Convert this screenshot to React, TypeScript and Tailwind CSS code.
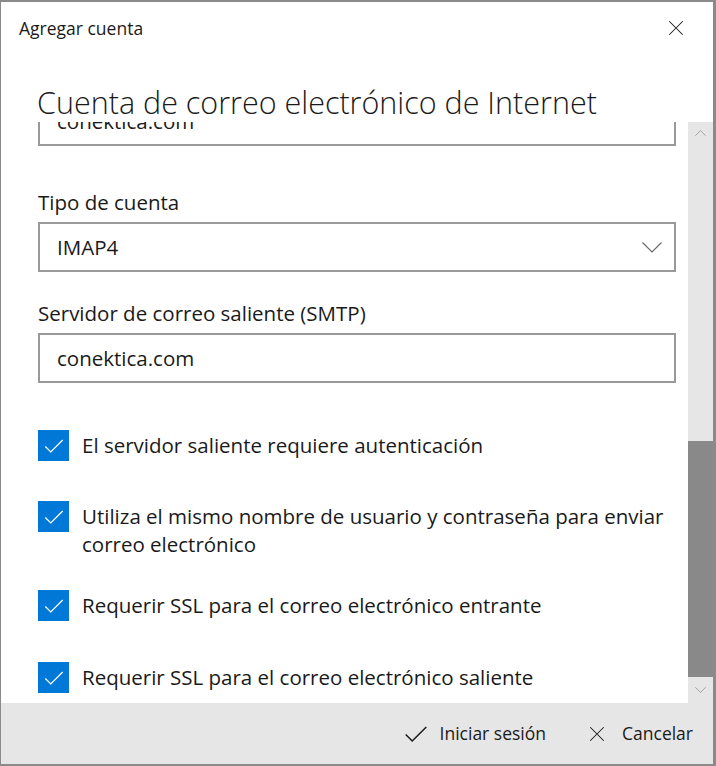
const font = { fontFamily: '"Open Sans", "Noto Sans", sans-serif' };

const options: { lines: string[]; gap: string }[] = [
  { lines: ['El servidor saliente requiere autenticación'], gap: 'mt-0' },
  { lines: ['Utiliza el mismo nombre de usuario y contraseña para enviar', 'correo electrónico'], gap: 'mt-[40px]' },
  { lines: ['Requerir SSL para el correo electrónico entrante'], gap: 'mt-[32px]' },
  { lines: ['Requerir SSL para el correo electrónico saliente'], gap: 'mt-[41px]' },
];

function Check({ className = '' }: { className?: string }) {
  return (
    <svg viewBox="0 0 24 24" className={className} fill="none" stroke="currentColor" strokeWidth="1.4">
      <path d="M2.5 12.5 L8.5 18.5 L21.5 5.5" />
    </svg>
  );
}

function Cross({ className = '' }: { className?: string }) {
  return (
    <svg viewBox="0 0 24 24" className={className} fill="none" stroke="currentColor" strokeWidth="1.4">
      <path d="M3 3 L21 21 M21 3 L3 21" />
    </svg>
  );
}

function Chevron({ up = false, className = '' }: { up?: boolean; className?: string }) {
  return (
    <svg viewBox="0 0 20 11" className={className} fill="none" stroke="currentColor" strokeWidth="1.1">
      <path d={up ? 'M0.5 10.5 L10 1 L19.5 10.5' : 'M0.5 0.5 L10 10 L19.5 0.5'} />
    </svg>
  );
}

function CheckRow({ lines, gap }: { lines: string[]; gap: string }) {
  return (
    <div className={`flex items-start gap-[13px] ${gap}`}>
      <div className="w-[31px] h-[31px] shrink-0 bg-[#0078d7] flex items-center justify-center text-white">
        <Check className="w-[22px] h-[22px]" />
      </div>
      <div className="text-[20.5px] leading-[28px] text-[#1a1a1a] pt-[1px]">
        {lines.map((l) => (
          <div key={l}>{l}</div>
        ))}
      </div>
    </div>
  );
}

export default function App() {
  return (
    <div
      style={font}
      className="w-[716px] h-[766px] bg-white border-l border-t-2 border-r-[3px] border-b-2 border-[#8a8a8a] flex flex-col overflow-hidden"
    >
      {/* Title bar */}
      <div className="h-[52px] shrink-0 flex items-center justify-between pl-[18px] pr-[28px]">
        <span className="text-[17.5px] text-[#1a1a1a]">Agregar cuenta</span>
        <Cross className="w-[18px] h-[18px] text-[#1a1a1a]" />
      </div>

      {/* Heading */}
      <div className="h-[68px] shrink-0 flex items-end pl-[36px]">
        <h1 className="text-[30.5px] leading-[36px] font-light text-[#1a1a1a] mb-[2px] whitespace-nowrap">
          Cuenta de correo electrónico de Internet
        </h1>
      </div>

      {/* Scroll area */}
      <div className="flex flex-1 min-h-0">
        <div className="flex-1 overflow-hidden pl-[37px] pr-[12px]">
          <div className="mt-[-26px] flex flex-col">
            <div className="h-[50px] border-2 border-[#999999] flex items-center px-[17px] text-[20.5px] text-[#1a1a1a]">
              conektica.com
            </div>

            <div className="mt-[43px] text-[20.5px] leading-[26px] text-[#1a1a1a]">Tipo de cuenta</div>
            <div className="mt-[7px] h-[50px] border-2 border-[#999999] flex items-center justify-between pl-[17px] pr-[12px] text-[20.5px] text-[#1a1a1a]">
              <span>IMAP4</span>
              <Chevron className="w-[20px] h-[11px] text-[#666666]" />
            </div>

            <div className="mt-[28px] text-[20.5px] leading-[26px] text-[#1a1a1a]">Servidor de correo saliente (SMTP)</div>
            <div className="mt-[7px] h-[50px] border-2 border-[#999999] flex items-center px-[17px] text-[20.5px] text-[#1a1a1a]">
              conektica.com
            </div>

            <div className="mt-[47px] flex flex-col">
              {options.map((o) => (
                <CheckRow key={o.lines[0]} lines={o.lines} gap={o.gap} />
              ))}
            </div>
          </div>
        </div>

        {/* Scrollbar */}
        <div className="w-[25px] shrink-0 bg-[#e6e6e6] flex flex-col items-center">
          <div className="h-[22px] w-full flex items-center justify-center">
            <Chevron up className="w-[11px] h-[6px] text-[#7a7a7a]" />
          </div>
          <div className="w-full h-[297px] shrink-0" />
          <div className="w-full h-[236px] shrink-0 bg-[#898989]" />
          <div className="flex-1 w-full flex items-center justify-center">
            <Chevron className="w-[11px] h-[6px] text-[#7a7a7a]" />
          </div>
        </div>
      </div>

      {/* Footer */}
      <div className="h-[61px] shrink-0 bg-[#e6e6e6] flex items-center justify-end gap-[42px] pr-[20px] text-[17.5px] text-[#1a1a1a]">
        <div className="flex items-center gap-[11px]">
          <Check className="w-[26px] h-[26px]" />
          <span>Iniciar sesión</span>
        </div>
        <div className="flex items-center gap-[16px]">
          <Cross className="w-[18px] h-[18px]" />
          <span>Cancelar</span>
        </div>
      </div>
    </div>
  );
}
